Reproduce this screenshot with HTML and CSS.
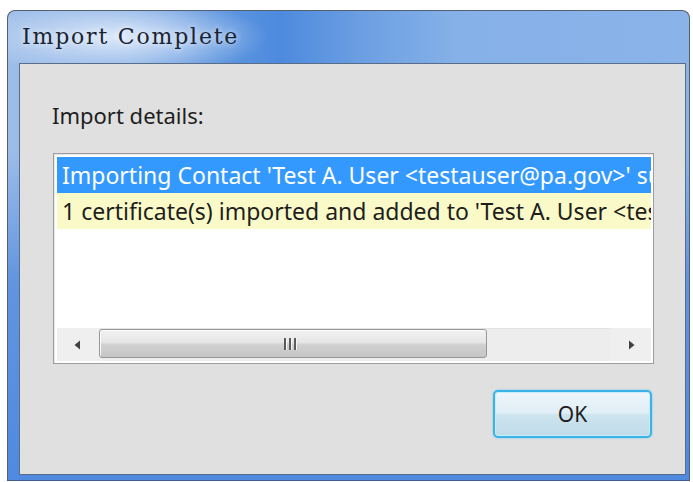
FILE: index.html
```html
<!DOCTYPE html>
<html lang="en">
<head>
<meta charset="utf-8">
<title>Import Complete</title>
<link rel="stylesheet" href="styles.css">
</head>
<body>
<div class="window">
  <div class="titlebar">
    <span class="title">Import Complete</span>
  </div>
  <div class="client">
    <div class="label">Import details:</div>
    <div class="listbox">
      <div class="rows">
        <div class="row selected">Importing Contact 'Test A. User &lt;testauser@pa.gov&gt;' su</div>
        <div class="row info">1 certificate(s) imported and added to 'Test A. User &lt;tes</div>
      </div>
      <div class="hscroll">
        <div class="arrow-btn">
          <svg width="7" height="10" viewBox="0 0 7 10"><path d="M6 0.5 L6 9.5 L0.5 5 Z" fill="#404040"/></svg>
        </div>
        <div class="track">
          <div class="thumb">
            <span class="grip"><i></i><i></i><i></i></span>
          </div>
        </div>
        <div class="arrow-btn">
          <svg width="7" height="10" viewBox="0 0 7 10"><path d="M1 0.5 L1 9.5 L6.5 5 Z" fill="#404040"/></svg>
        </div>
      </div>
    </div>
    <div class="actions">
      <button class="btn default">OK</button>
    </div>
  </div>
</div>
</body>
</html>
```

FILE: styles.css
```css
html, body {
  margin: 0;
  padding: 0;
  background: #ffffff;
  width: 693px;
  height: 482px;
  overflow: hidden;
}

/* Aero-style window frame */
.window {
  position: relative;
  box-sizing: border-box;
  margin: 10px 0 0 7px;
  width: 683px;
  height: 471px;
  border: 1px solid #56606d;
  border-bottom: 1px solid #3f5e8a;
  border-radius: 8px 8px 0 0;
  background:
    radial-gradient(ellipse 150px 40px at 110px 26px, rgba(225, 236, 250, 0.95), rgba(225, 236, 250, 0) 100%),
    linear-gradient(to right, #9dbde9 0%, #86aee6 18%, #6197df 30%, #4d8ade 40%, #6c9fe2 52%, #86b1e8 66%, #89b3e9 100%);
  display: flex;
  flex-direction: column;
  padding: 0 3px 5px 11px;
  overflow: hidden;
}

/* lower frame band is a flatter, brighter blue */
.window::before {
  content: "";
  position: absolute;
  left: 0;
  right: 0;
  top: 140px;
  bottom: 0;
  background: linear-gradient(to bottom, rgba(88, 142, 220, 0) 0%, rgba(88, 142, 220, 0.85) 40%, #4f8ae0 100%);
  pointer-events: none;
}

.titlebar {
  position: relative;
  height: 52px;
  flex: none;
  display: flex;
  align-items: center;
  padding-left: 3px;
  padding-bottom: 2px;
  box-sizing: border-box;
}

.title {
  font-family: "DejaVu Serif", "Liberation Serif", serif;
  font-size: 22px;
  letter-spacing: 1.8px;
  color: #1b2433;
  text-shadow: 0 0 6px rgba(255, 255, 255, 0.9);
}

.client {
  position: relative;
  flex: 1;
  background: #e0e0e0;
  border: 1px solid #586d8a;
  display: flex;
  flex-direction: column;
  padding: 37px 0 0 32px;
  font-family: "Noto Sans", "Open Sans", sans-serif;
  color: #1e1e1e;
}

.label {
  font-size: 22px;
  line-height: 28px;
  margin-bottom: 24px;
}

.listbox {
  box-sizing: border-box;
  width: 601px;
  height: 211px;
  margin-left: 1px;
  border: 1px solid #9d9d9d;
  box-shadow: inset 1px 1px 0 #e6e6e6;
  background: #ffffff;
  padding: 3px 2px 2px 3px;
  display: flex;
  flex-direction: column;
}

.rows {
  flex: 1;
  overflow: hidden;
}

.row {
  height: 36px;
  line-height: 36px;
  white-space: nowrap;
  overflow: hidden;
  font-size: 23px;
  padding-left: 5px;
}

.row.selected {
  background: #3399ff;
  color: #ffffff;
}

.row.info {
  background: #fafac8;
  color: #1e1e1e;
}

/* horizontal scrollbar */
.hscroll {
  height: 33px;
  flex: none;
  display: flex;
  background: #ededed;
  box-shadow: inset 0 1px 0 #e4e4e4;
}

.arrow-btn {
  width: 40px;
  display: flex;
  align-items: center;
  justify-content: center;
  background: #efefef;
}

.arrow-btn:first-child {
  padding-right: 2px;
}

.arrow-btn:last-child {
  margin-left: auto;
}

.track {
  flex: 1;
  padding: 1px 0 3px 0;
  display: flex;
}

.thumb {
  box-sizing: border-box;
  width: 388px;
  border: 1px solid #979797;
  border-radius: 3px;
  background: linear-gradient(to bottom, #f2f2f2 0%, #e6e6e6 45%, #d0d0d0 55%, #c6c6c6 100%);
  box-shadow: inset 1px 1px 0 #fbfbfb;
  display: flex;
  align-items: center;
  justify-content: center;
}

.grip {
  display: flex;
  gap: 3px;
  margin-left: -6px;
}

.grip i {
  display: block;
  width: 2px;
  height: 12px;
  background: #5b5b5b;
  box-shadow: 1px 0 0 #f4f4f4;
}

.actions {
  display: flex;
  justify-content: flex-end;
  padding-right: 33px;
  margin-top: 26px;
}

.btn {
  box-sizing: border-box;
  width: 159px;
  height: 48px;
  font-family: "Noto Sans", "Open Sans", sans-serif;
  font-size: 21px;
  color: #1e1e1e;
  border-radius: 5px;
  cursor: default;
}

.btn.default {
  border: 2px solid #3ab3e6;
  box-shadow: inset 0 0 0 1px #c9ecfb, 0 0 2px #5fc4f0;
  background: linear-gradient(to bottom, #edf6fb 0%, #e0eef6 48%, #cde4ee 52%, #c0dbe9 100%);
}
```
